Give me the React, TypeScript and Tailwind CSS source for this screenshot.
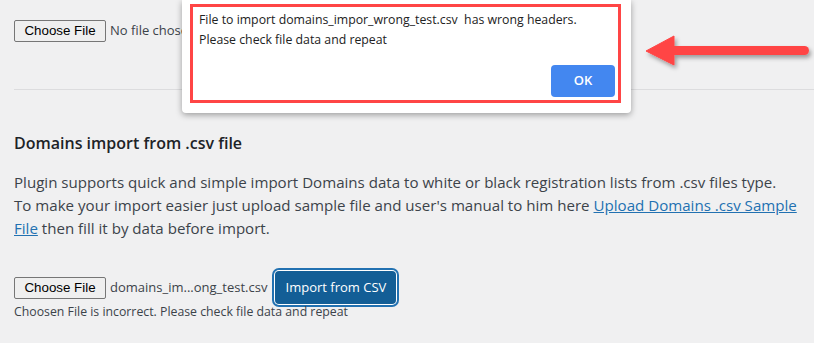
import React from "react";

function ChooseFile() {
    return (
        <button className="h-[22px] w-[92px] shrink-0 rounded-[2px] border border-[#767676] bg-[#efefef] font-['Liberation_Sans',Arial,sans-serif] text-[13.33px] leading-none text-black">
            Choose File
        </button>
    );
}

function Arrow() {
    return (
        <svg className="absolute left-[636px] top-[26px]" width="178" height="50" viewBox="0 0 178 50">
            <defs>
                <filter id="arrowShadow" x="-10%" y="-40%" width="120%" height="180%">
                    <feDropShadow dx="2" dy="3" stdDeviation="2" floodColor="#000" floodOpacity="0.35" />
                </filter>
            </defs>
            <g filter="url(#arrowShadow)" fill="#ff4545" stroke="#ff4545">
                <line x1="36" y1="24.5" x2="168.5" y2="24.5" strokeWidth="9" strokeLinecap="round" />
                <polygon points="10,25 38,10 38,39" strokeWidth="1" strokeLinejoin="round" />
            </g>
        </svg>
    );
}

export default function App() {
    return (
        <div className="relative h-[343px] w-[814px] overflow-hidden bg-[#f0f0f1] font-['Open_Sans',sans-serif] text-[#3c434a]">
            <div className="pl-[14px]">
                {/* First file picker */}
                <div className="flex items-center gap-[4px] pt-[20px]">
                    <ChooseFile />
                    <span className="text-[13px] text-[#3c434a]">No file chosen</span>
                </div>

                <div className="mt-[47px] h-px bg-[#dcdcde]" />

                {/* Domains import section */}
                <h2 className="mt-[43px] text-[16px] font-semibold leading-[20px] text-[#1d2327]">
                    Domains import from .csv file
                </h2>
                <p className="mt-[18px] whitespace-nowrap text-[15.1px] leading-[23px]">
                    Plugin supports quick and simple import Domains data to white or black registration lists from .csv files type.
                    <br />
                    To make your import easier just upload sample file and user's manual to him here{" "}
                    <a href="#" className="text-[#2271b1] underline">Upload Domains .csv Sample</a>
                    <br />
                    <a href="#" className="text-[#2271b1] underline">File</a> then fill it by data before import.
                </p>

                <div className="mt-[31px] flex items-center">
                    <ChooseFile />
                    <span className="ml-[4px] text-[13px] text-[#3c434a]">domains_im...ong_test.csv</span>
                    <button className="ml-[8px] h-[33px] w-[121px] rounded-[4px] bg-[#135e96] text-[13px] text-white shadow-[0_0_0_1px_#fff,0_0_0_3px_#2271b1]">
                        Import from CSV
                    </button>
                </div>
                <div className="text-[12.3px] leading-[16px]">Choosen File is incorrect. Please check file data and repeat</div>
            </div>

            {/* Alert dialog */}
            <div className="absolute left-[182px] top-0 h-[113px] w-[449px] rounded-b-[4px] bg-white px-[10px] pb-[10px] pl-[8px] pt-[4px] shadow-[0_2px_6px_rgba(0,0,0,0.35)]">
                <div className="flex h-[99px] flex-col border-[3px] border-[#ff4545] px-[3px] pb-[3px] pl-[6px] pt-[3px]">
                    <div className="text-[12.3px] leading-[20px] text-[#222]">
                        File to import domains_impor_wrong_test.csv&nbsp; has wrong headers.
                        <br />
                        Please check file data and repeat
                    </div>
                    <div className="mt-auto flex justify-end">
                        <button className="h-[32px] w-[64px] rounded-[4px] bg-[#4387f0] text-[13px] font-semibold text-white">OK</button>
                    </div>
                </div>
            </div>

            <Arrow />
        </div>
    );
}
